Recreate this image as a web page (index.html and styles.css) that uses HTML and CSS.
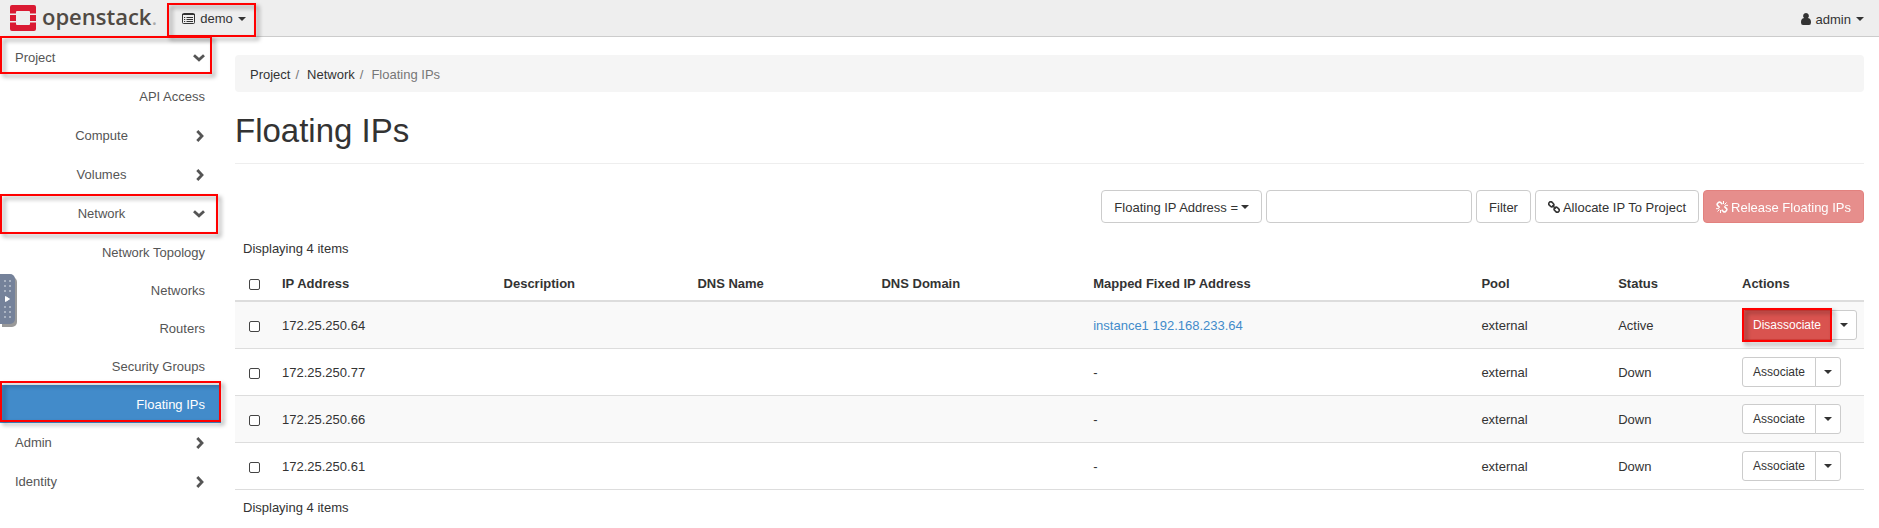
FILE: index.html
```html
<!DOCTYPE html>
<html lang="en">
<head>
<meta charset="utf-8">
<title>Floating IPs - OpenStack Dashboard</title>
<meta name="viewport" content="width=device-width, initial-scale=1">
<link rel="stylesheet" href="styles.css">
</head>
<body>
<svg class="sprite" aria-hidden="true">
  <symbol id="down" viewBox="0 0 12 8"><path d="M1 1.200 6 5.800l5-4.600" fill="none" stroke="currentColor" stroke-width="2.800"/></symbol>
  <symbol id="right" viewBox="0 0 8 12"><path d="M1.300 1 6 6l-4.700 5" fill="none" stroke="currentColor" stroke-width="2.800"/></symbol>
  <symbol id="link" viewBox="0 0 12 12"><g fill="none" stroke="currentColor" stroke-width="1.600"><rect x="-2.700" y="-2" width="5.400" height="4" rx="1.900" transform="translate(3.300 3.300) rotate(45)"/><rect x="-2.700" y="-2" width="5.400" height="4" rx="1.900" transform="translate(8.700 8.700) rotate(45)"/><path d="m4.300 4.300 3.400 3.400"/></g></symbol>
  <symbol id="unlink" viewBox="0 0 12 12"><g fill="none" stroke="currentColor" stroke-width="1.500"><path d="M6.300 3.300 4.700 1.600a1.700 1.700 0 0 0-2.400 0l-.6.600a1.700 1.700 0 0 0 0 2.400l2 2M5.700 8.700l1.600 1.700a1.700 1.700 0 0 0 2.400 0l.6-.6a1.700 1.700 0 0 0 0-2.400l-2-2"/><path d="M3.500 8.500 1.500 10.500M4.500 9v3M0 7.700h3M8.500 3.500l2-2M7.500 3V0M12 4.300H9" stroke-width="1"/></g></symbol>
</svg>

<header class="topbar">
  <a class="brand" href="#">
    <svg class="brand-mark" viewBox="0 0 26 26" aria-hidden="true">
      <path fill="#da1a32" d="M2 0h22q2 0 2 2v6.500h-6V7q0-1-1-1H7q-1 0-1 1v1.500H0V2q0-2 2-2zM0 17.500h6V19q0 1 1 1h12q1 0 1-1v-1.500h6V24q0 2-2 2H2q-2 0-2-2zM0 10h6v6H0zM20 10h6v6h-6z"/>
    </svg>
    <span class="brand-name">openstack<span class="brand-dot">.</span></span>
  </a>
  <button class="menu marked" type="button">
    <svg class="list-icon" viewBox="0 0 13 11" aria-hidden="true"><path fill="none" stroke="currentColor" d="M1.500.5h10q1 0 1 1v8q0 1-1 1h-10q-1 0-1-1v-8q0-1 1-1zM0 1.500h13M2 4.500h1.200M2 6.500h1.200M2 8.500h1.200M4.500 4.500H11M4.500 6.500H11M4.500 8.500H11"/></svg>
    demo<span class="caret"></span>
  </button>
  <button class="menu user" type="button">
    <svg class="user-icon" viewBox="0 0 10 12" aria-hidden="true"><path fill="currentColor" d="M5 0a2.900 2.900 0 0 1 2 5c2.300.2 3 2 3 4.500Q10 12 8 12H2Q0 12 0 9.500C0 7 .7 5.200 3 5a2.900 2.900 0 0 1 2-5z"/></svg>
    admin<span class="caret"></span>
  </button>
</header>

<div class="layout">
  <nav class="sidebar" aria-label="Dashboards">
    <a class="item marked mark-project" href="#"><span>Project</span><svg class="down"><use href="#down"/></svg></a>
    <a class="item leaf" href="#">API Access</a>
    <a class="item group" href="#"><span>Compute</span><svg class="right"><use href="#right"/></svg></a>
    <a class="item group" href="#"><span>Volumes</span><svg class="right"><use href="#right"/></svg></a>
    <a class="item group marked mark-network" href="#"><span>Network</span><svg class="down"><use href="#down"/></svg></a>
    <div class="panels">
      <a class="item leaf" href="#">Network Topology</a>
      <a class="item leaf" href="#">Networks</a>
      <a class="item leaf" href="#">Routers</a>
      <a class="item leaf" href="#">Security Groups</a>
      <a class="item leaf active marked" href="#" aria-current="page">Floating IPs</a>
    </div>
    <a class="item" href="#"><span>Admin</span><svg class="right"><use href="#right"/></svg></a>
    <a class="item" href="#"><span>Identity</span><svg class="right"><use href="#right"/></svg></a>
  </nav>

  <main class="content">
    <ol class="breadcrumb">
      <li><a href="#">Project</a></li>
      <li><a href="#">Network</a></li>
      <li class="current">Floating IPs</li>
    </ol>
    <h1>Floating IPs</h1>

    <form class="actions">
      <button class="btn" type="button">Floating IP Address =<span class="caret"></span></button>
      <input class="search" type="text" aria-label="Filter value">
      <button class="btn" type="button">Filter</button>
      <button class="btn" type="button"><svg class="btn-icon"><use href="#link"/></svg>Allocate IP To Project</button>
      <button class="btn danger" type="button" disabled><svg class="btn-icon"><use href="#unlink"/></svg>Release Floating IPs</button>
    </form>

    <p class="count">Displaying 4 items</p>
    <table>
      <colgroup>
        <col class="c-check"><col class="c-ip"><col class="c-desc"><col class="c-name"><col class="c-domain"><col><col class="c-pool"><col class="c-status"><col class="c-actions">
      </colgroup>
      <thead>
        <tr><th class="check"><input type="checkbox" aria-label="Select all"></th><th>IP Address</th><th>Description</th><th>DNS Name</th><th>DNS Domain</th><th>Mapped Fixed IP Address</th><th>Pool</th><th>Status</th><th>Actions</th></tr>
      </thead>
      <tbody>
        <tr><td class="check"><input type="checkbox" aria-label="Select 172.25.250.64"></td><td>172.25.250.64</td><td></td><td></td><td></td><td><a href="#">instance1 192.168.233.64</a></td><td>external</td><td>Active</td>
          <td><div class="split"><button class="btn small danger marked" type="button">Disassociate</button><button class="btn small toggle" type="button" aria-label="More actions"><span class="caret"></span></button></div></td></tr>
        <tr><td class="check"><input type="checkbox" aria-label="Select 172.25.250.77"></td><td>172.25.250.77</td><td></td><td></td><td></td><td>-</td><td>external</td><td>Down</td>
          <td><div class="split"><button class="btn small" type="button">Associate</button><button class="btn small toggle" type="button" aria-label="More actions"><span class="caret"></span></button></div></td></tr>
        <tr><td class="check"><input type="checkbox" aria-label="Select 172.25.250.66"></td><td>172.25.250.66</td><td></td><td></td><td></td><td>-</td><td>external</td><td>Down</td>
          <td><div class="split"><button class="btn small" type="button">Associate</button><button class="btn small toggle" type="button" aria-label="More actions"><span class="caret"></span></button></div></td></tr>
        <tr><td class="check"><input type="checkbox" aria-label="Select 172.25.250.61"></td><td>172.25.250.61</td><td></td><td></td><td></td><td>-</td><td>external</td><td>Down</td>
          <td><div class="split"><button class="btn small" type="button">Associate</button><button class="btn small toggle" type="button" aria-label="More actions"><span class="caret"></span></button></div></td></tr>
      </tbody>
    </table>
    <p class="count">Displaying 4 items</p>
  </main>
</div>

<button class="handle" type="button" aria-label="Open side panel">
  <svg viewBox="0 0 15 50" aria-hidden="true">
    <path d="M4 7h2M9 7h2M4 12h2M9 12h2M4 17h2M9 17h2M4 33h2M9 33h2M4 38h2M9 38h2M4 43h2M9 43h2" stroke="#aab3c2" stroke-width="2"/>
    <path d="M5.500 22.500v5l4-2.500z" fill="#fff" stroke="#fff" stroke-linejoin="round"/>
  </svg>
</button>
</body>
</html>
```

FILE: styles.css
```css
* { box-sizing: border-box; }

body {
  margin: 0;
  background: #fff;
  color: #333;
  font: 13px/19px "Liberation Sans", Arial, sans-serif;
}

button, input { font: inherit; color: inherit; }
a { color: #428bca; text-decoration: none; }
.sprite { display: none; }

.caret {
  display: inline-block;
  border: 4px solid transparent;
  border-top-color: currentColor;
  border-bottom: 0;
}

/* Red outline with a shadow that falls on both sides of its stroke */
.marked { position: relative; }
.marked::after {
  content: "";
  position: absolute;
  z-index: 1;
  inset: 0;
  border: 2px solid #f00;
  filter: drop-shadow(3px 3px 2px rgba(0, 0, 0, 0.4));
  pointer-events: none;
}

/* Top bar */
.topbar {
  display: flex;
  align-items: center;
  height: 37px;
  padding: 0 15px 0 10px;
  background: #eee;
  border-bottom: 1px solid #ccc;
}
.brand { display: flex; align-items: center; gap: 6px; color: #504a44; }
.brand-mark { width: 26px; height: 26px; }
.brand-name { font: 600 22px/32px "Open Sans", sans-serif; padding-bottom: 4px; }
.brand-dot { color: #aaa; font-weight: 400; }
.menu {
  display: flex;
  align-items: center;
  gap: 5px;
  height: 34px;
  padding: 0;
  border: 0;
  background: none;
}
.menu.marked { margin: 3px 0 0 10px; padding: 0 10px 2px 15px; }
.menu.user { margin-left: auto; padding-top: 2px; }
.list-icon { width: 13px; height: 11px; }
.user-icon { width: 10px; height: 12px; }

/* Page frame */
.layout { display: flex; }
.sidebar { flex: 0 0 221px; padding-top: 1px; }
.content { flex: 1; min-width: 0; padding: 18px 15px 0 14px; }

/* Side navigation */
.item {
  display: flex;
  align-items: center;
  justify-content: space-between;
  height: 39px;
  padding: 0 16px 0 15px;
  color: #555;
}
.leaf { justify-content: flex-end; }
.group span { flex: 1; text-align: center; padding-right: 5px; }
.panels .item { height: 38px; }
.down { width: 12px; height: 8px; }
.right { width: 8px; height: 12px; margin-right: 1px; }
.group .right { margin-left: 3px; }
.item.active { background: #428bca; color: #fff; }
.mark-project::after { inset: -2px 9px 3px 0; }
.mark-network::after { inset: 0 3px -1px 0; }
.active.marked::after { inset: -4px 0 1px 0; }

/* Breadcrumb and heading */
.breadcrumb {
  display: flex;
  margin: 0;
  padding: 10px 15px 8px;
  border-radius: 4px;
  background: #f5f5f5;
  list-style: none;
}
.breadcrumb a { color: #333; }
.breadcrumb li + li::before { content: "/"; padding: 0 8px 0 5px; color: #777; }
.current { color: #777; }
h1 {
  margin: 19px 0 26px;
  padding-bottom: 12px;
  border-bottom: 1px solid #eee;
  font-size: 33px;
  font-weight: 400;
  line-height: 40px;
}

/* Table toolbar */
.actions { display: flex; justify-content: flex-end; gap: 4px; margin: 0 0 16px; }
.btn {
  display: flex;
  align-items: center;
  gap: 3px;
  height: 33px;
  padding: 1px 12px 0;
  border: 1px solid #ccc;
  border-radius: 4px;
  background: #fff;
  white-space: nowrap;
}
.btn-icon { width: 12px; height: 12px; }
.btn.danger { background: #d9534f; border-color: #d43f3a; color: #fff; }
.btn:disabled { opacity: 0.65; }
.search {
  width: 206px;
  height: 33px;
  padding: 0 12px;
  border: 1px solid #ccc;
  border-radius: 4px;
  background: #fff;
}

/* Table */
.count { margin: 0; padding: 0 8px; }
.actions + .count { padding-bottom: 9px; }
table { width: 100%; table-layout: fixed; border-collapse: separate; border-spacing: 0; }
th, td { padding: 0 8px; text-align: left; white-space: nowrap; }
th { height: 35px; border-bottom: 2px solid #ddd; }
td { height: 47px; border-bottom: 1px solid #ddd; }
tbody tr:nth-child(odd) { background: #f9f9f9; }
table + .count { padding-top: 8px; }
.check { padding-left: 14px; }
.check input {
  display: block;
  width: 11px;
  height: 11px;
  margin: 2px 0 0;
  border: 1px solid #444;
  border-radius: 2px;
  background: #fff;
  appearance: none;
}
.c-check { width: 39px; }
.c-ip { width: 13.6%; }
.c-desc { width: 11.9%; }
.c-name { width: 11.3%; }
.c-domain { width: 13%; }
.c-pool { width: 8.4%; }
.c-status { width: 7.6%; }
.c-actions { width: 130px; }

.split { display: flex; }
.btn.small { height: 30px; padding: 1px 10px 0; border-radius: 3px 0 0 3px; font-size: 12px; }
.btn.toggle { margin-left: -1px; padding: 0 8px; border-radius: 0 3px 3px 0; }
.small.marked::after { inset: -3px -1px; }

/* Side panel handle */
.handle {
  position: fixed;
  left: 0;
  top: 274px;
  width: 15px;
  height: 50px;
  padding: 0;
  border: 0;
  border-radius: 0 5px 5px 0;
  background: #75829a;
  box-shadow: 2px 3px 0 #999;
}
.handle svg { display: block; width: 15px; height: 50px; }
```
